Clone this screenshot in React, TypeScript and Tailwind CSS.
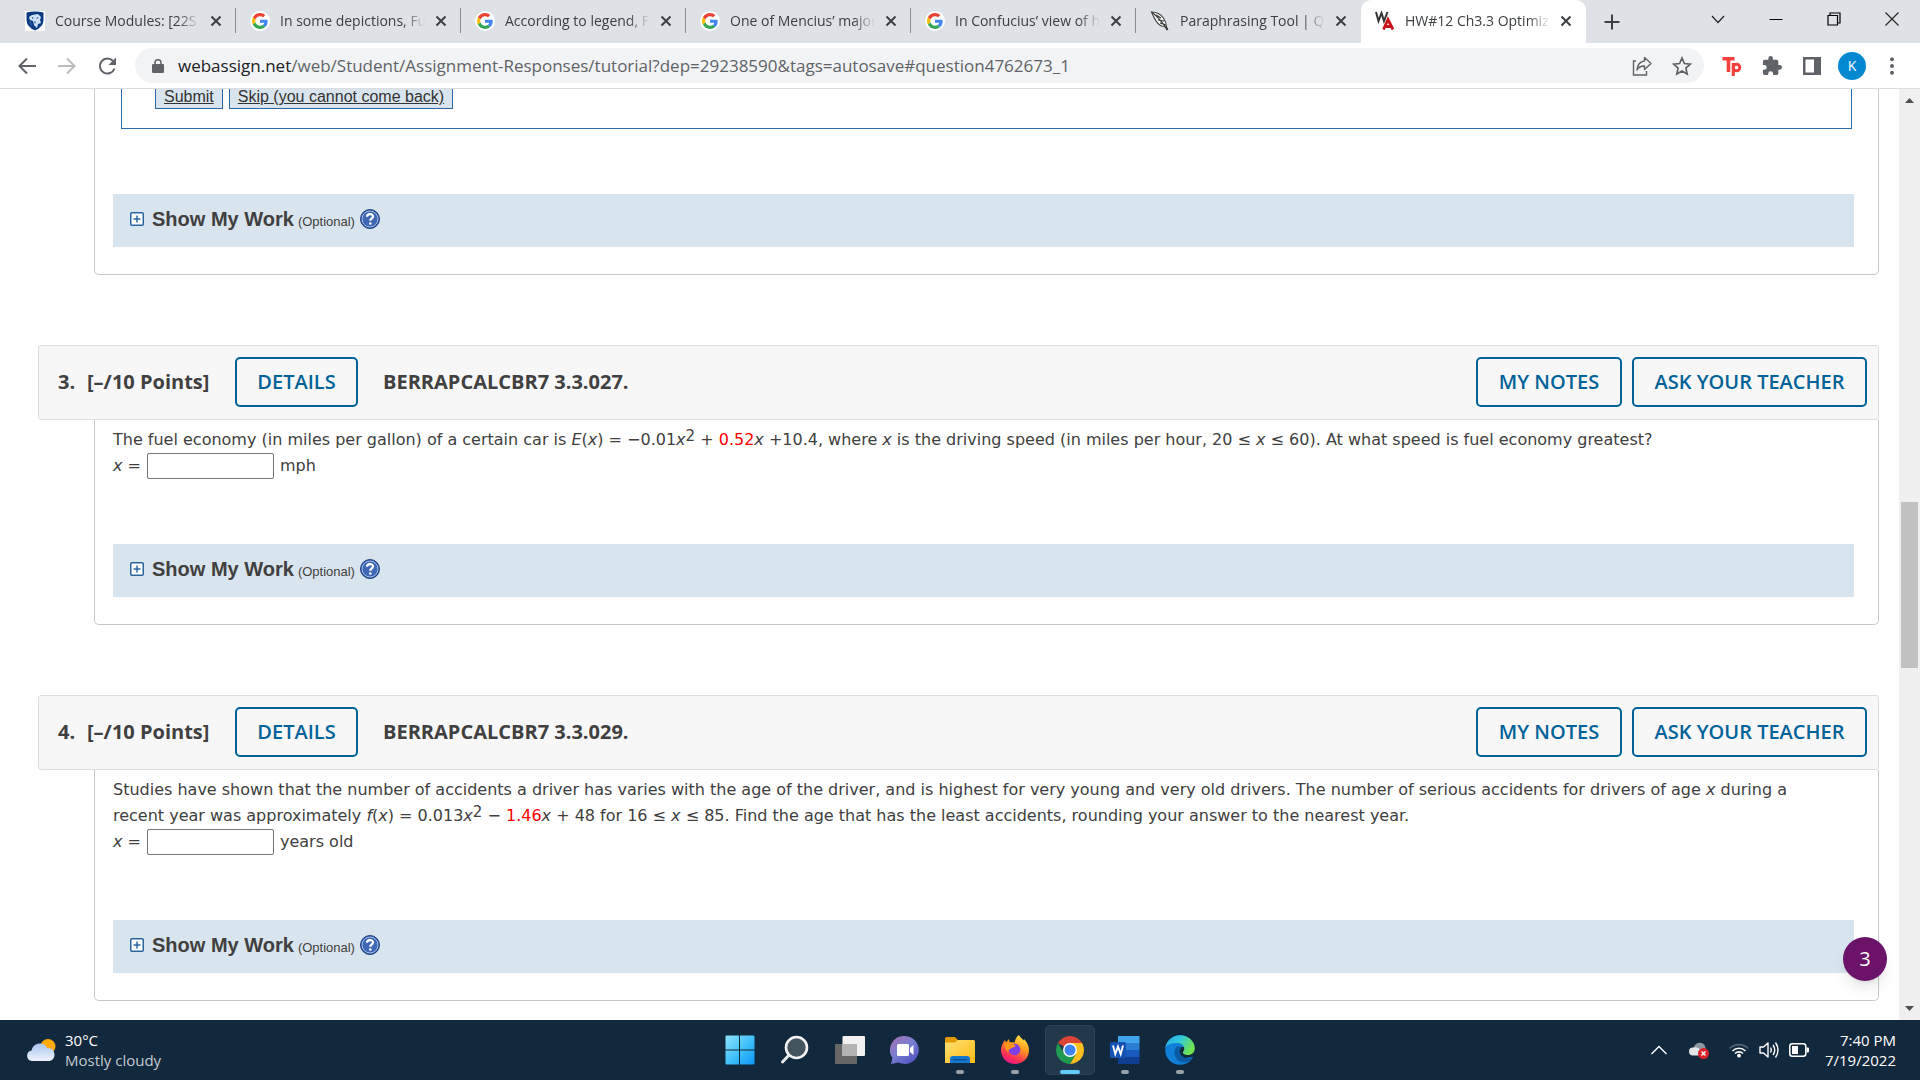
import React from "react";

const tabs = [
  { title: "Course Modules: [22S", icon: "shield" },
  { title: "In some depictions, Fu", icon: "google" },
  { title: "According to legend, F", icon: "google" },
  { title: "One of Mencius’ major", icon: "google" },
  { title: "In Confucius’ view of h", icon: "google" },
  { title: "Paraphrasing Tool | Qu", icon: "quill" },
  { title: "HW#12 Ch3.3 Optimiz", icon: "webassign", active: true },
];

const GoogleIcon = () => (
  <svg viewBox="0 0 24 24" className="h-5 w-5">
    <circle cx="12" cy="12" r="12" fill="#fff" />
    <g transform="translate(2.4 2.4) scale(0.4)">
      <path fill="#EA4335" d="M24 9.5c3.54 0 6.71 1.22 9.21 3.6l6.85-6.85C35.9 2.38 30.47 0 24 0 14.62 0 6.51 5.38 2.56 13.22l7.98 6.19C12.43 13.72 17.74 9.5 24 9.5z" />
      <path fill="#4285F4" d="M46.98 24.55c0-1.57-.15-3.09-.38-4.55H24v9.02h12.94c-.58 2.96-2.26 5.48-4.78 7.18l7.73 6c4.51-4.18 7.09-10.36 7.09-17.65z" />
      <path fill="#FBBC05" d="M10.53 28.59c-.48-1.45-.76-2.99-.76-4.59s.27-3.14.76-4.59l-7.98-6.19C.92 16.46 0 20.12 0 24c0 3.88.92 7.54 2.56 10.78l7.97-6.19z" />
      <path fill="#34A853" d="M24 48c6.48 0 11.93-2.13 15.89-5.81l-7.73-6c-2.15 1.45-4.92 2.3-8.16 2.3-6.26 0-11.57-4.22-13.47-9.91l-7.98 6.19C6.51 42.62 14.62 48 24 48z" />
    </g>
  </svg>
);

const ShieldIcon = () => (
  <svg viewBox="0 0 20 20" className="h-5 w-5">
    <path fill="#fff" d="M0 0h20v20H0z" />
    <path fill="#0b3a82" d="M1.5 1.5Q10-.5 18.5 1.5v8Q18 16 10 19.5 2 16 1.5 9.5z" />
    <path fill="#cfe0f5" d="M4 6l3-2 6-1 3 3-1 3 1 3-3 1-1 4-3-3-1-4-3-1z" />
    <path fill="#2f5fa5" d="M7 6l2 1-2 1zm4 1l3-1-2 2zM9 10l2 1-1 2zM4 10l2 1 1 4-2-2z" />
  </svg>
);

const QuillIcon = () => (
  <svg viewBox="0 0 20 20" className="h-5 w-5" fill="none" stroke="#3a3a3a" strokeWidth="1.1">
    <path fill="#f5f5f5" d="M1.5 1c5 0 9 2 12 6 2 3 3 6 3 9-4 0-8-2-10.5-6C4 7 3 4 1.5 1z" />
    <path d="M1.5 1c6 4 10 9 16 18M6 4l5 3M8 9l6 1M10 12l6 2" />
    <path strokeWidth="2" d="M16 16l1.5 3" />
  </svg>
);

const WebAssignIcon = () => (
  <svg viewBox="0 0 20 20" className="h-5 w-5" fill="none">
    <path stroke="#333" strokeWidth="2" d="M1 1l2.500 9L6.500 2l2.500 8L12.500 1" />
    <path stroke="#c8151b" strokeWidth="2.800" d="M8.500 18.500L13 8.500l5 10M11 15.500h5" />
  </svg>
);

const TabIcon: React.FC<{ name: string }> = ({ name }) => {
  if (name === "google") return <GoogleIcon />;
  if (name === "shield") return <ShieldIcon />;
  if (name === "quill") return <QuillIcon />;
  return <WebAssignIcon />;
};

const TabStrip = () => (
  <div className="flex h-[43px] bg-[#dee1e6]">
    <div role="tablist" className="flex min-w-0 pl-[11px]">
      {tabs.map((tab, i) => (
        <div
          key={tab.title}
          className={`flex w-[225px] items-center pb-0.5 ${tab.active ? "rounded-t-[10px] bg-white" : ""}`}
        >
          <div className="flex min-w-0 flex-1 items-center pl-3.5">
            <span className="shrink-0">
              <TabIcon name={tab.icon} />
            </span>
            <button
              role="tab"
              aria-selected={!!tab.active}
              className="ml-2.5 w-[145px] overflow-hidden text-left text-sm leading-5 whitespace-nowrap text-[#3c4043] [mask-image:linear-gradient(to_right,black_85%,transparent)]"
            >
              {tab.title}
            </button>
            <button aria-label="Close tab" className="ml-2.5 shrink-0">
              <svg viewBox="0 0 12 12" className="h-3 w-3" stroke="#3c4043" strokeWidth="2">
                <path d="M1.5 1.5l9 9m0-9l-9 9" />
              </svg>
            </button>
          </div>
          <span className={`h-[25px] w-px shrink-0 ${i < 5 ? "bg-[#8a8d91]" : ""}`} />
        </div>
      ))}
    </div>
    <button aria-label="New tab" className="ml-[18px] self-center">
      <svg viewBox="0 0 16 16" className="h-4 w-4" stroke="#3c4043" strokeWidth="2">
        <path d="M8 0.5v15M0.5 8h15" />
      </svg>
    </button>
    <div className="ml-auto flex h-[37px] items-center gap-11 pr-[21px]">
      <button aria-label="Search tabs">
        <svg viewBox="0 0 14 14" className="h-3.5 w-3.5" fill="none" stroke="#222" strokeWidth="1.2">
          <path d="M1 4l6 6.5L13 4" />
        </svg>
      </button>
      <button aria-label="Minimize">
        <svg viewBox="0 0 14 14" className="h-3.5 w-3.5" stroke="#000" strokeWidth="1">
          <path d="M0.5 7.500h13" />
        </svg>
      </button>
      <button aria-label="Restore">
        <svg viewBox="0 0 14 14" className="h-3.5 w-3.5" fill="none" stroke="#000" strokeWidth="1.2">
          <path d="M1 3.5h9.5V13H1zM3 3.5V1h10v10h-2.5" />
        </svg>
      </button>
      <button aria-label="Close">
        <svg viewBox="0 0 14 14" className="h-3.5 w-3.5" stroke="#222" strokeWidth="1.1">
          <path d="M0.5 0.5l13 13m0-13l-13 13" />
        </svg>
      </button>
    </div>
  </div>
);

const Toolbar = () => (
  <div className="flex h-[46px] items-center border-b border-[#dadce0] bg-white">
    <div className="flex shrink-0 items-center gap-5 pl-[17px]">
      <button aria-label="Back">
        <svg viewBox="0 0 20 20" className="h-5 w-5" fill="none" stroke="#5f6368" strokeWidth="2">
          <path d="M19 10H3M10 2.5L2.5 10l7.5 7.5" />
        </svg>
      </button>
      <button aria-label="Forward">
        <svg viewBox="0 0 20 20" className="h-5 w-5" fill="none" stroke="#babcbe" strokeWidth="2">
          <path d="M1 10h16M10 2.5l7.5 7.5-7.5 7.5" />
        </svg>
      </button>
      <button aria-label="Reload">
        <svg viewBox="0 0 20 20" className="h-5 w-5" fill="none" stroke="#5f6368" strokeWidth="2">
          <path d="M17.500 12.500a7.500 7.500 0 1 1-1.500-7.500" />
          <path fill="#5f6368" stroke="none" d="M19 1.500v7.500H11.500z" />
        </svg>
      </button>
    </div>
    <div className="ml-[18px] flex h-[35px] min-w-0 flex-1 items-center rounded-full bg-[#f1f3f4] pr-3 pl-[17px]">
      <svg viewBox="0 0 12 14" className="h-3.5 w-3 shrink-0">
        <path fill="#5f6368" d="M1.5 5h9A1.2 1.2 0 0 1 12 6.2v6.600A1.2 1.2 0 0 1 10.8 14H1.2A1.2 1.2 0 0 1 0 12.8V6.2A1.2 1.2 0 0 1 1.2 5z" />
        <path fill="none" stroke="#5f6368" strokeWidth="1.5" d="M3 5.5V3.8a3 3 0 0 1 6 0v1.7" />
      </svg>
      <div
        role="textbox"
        aria-label="Address and search bar"
        className="ml-3.5 min-w-0 flex-1 truncate text-[17px] text-[#5f6368]"
      >
        <span className="text-[#202124]">webassign.net</span>
        /web/Student/Assignment-Responses/tutorial?dep=29238590&amp;tags=autosave#question4762673_1
      </div>
      <button aria-label="Share this page" className="mr-5">
        <svg viewBox="0 0 20 20" className="h-5 w-5" fill="none" stroke="#5f6368" strokeWidth="1.4">
          <path d="M4 5H1.500v14h13v-4" />
          <path strokeLinejoin="round" d="M12.5 1.500l6.500 6-6.500 6v-3.500c-3.500 0-6 1-7.500 4 .5-5 3-8.500 7.500-9z" />
        </svg>
      </button>
      <button aria-label="Bookmark this tab">
        <svg viewBox="0 0 20 20" className="h-5 w-5" fill="none" stroke="#5f6368" strokeWidth="1.7">
          <path d="M10 2l2.400 5.500 6 .6-4.500 4 1.300 5.900L10 14.900 4.800 18l1.300-5.900-4.500-4 6-.6z" />
        </svg>
      </button>
    </div>
    <div className="flex shrink-0 items-center gap-5 px-[18px]">
      <button aria-label="Tp extension">
        <svg viewBox="0 0 20 20" className="h-5 w-5" fill="none" stroke="#f5403c" strokeWidth="3.6">
          <path d="M0.5 2.8h12M6.500 3v13" />
          <path strokeWidth="3" d="M11.3 7v13" />
          <circle cx="14.500" cy="11.500" r="3.3" strokeWidth="3" />
        </svg>
      </button>
      <button aria-label="Extensions">
        <svg viewBox="1 1 22 22" className="h-5 w-5" fill="#5f6368">
          <path d="M20.500 11H19V7a2 2 0 0 0-2-2h-4V3.500a2.500 2.500 0 0 0-5 0V5H4a2 2 0 0 0-2 2v3.800h1.500a2.700 2.700 0 0 1 0 5.400H2V20a2 2 0 0 0 2 2h3.800v-1.500a2.700 2.700 0 0 1 5.400 0V22H17a2 2 0 0 0 2-2v-4h1.500a2.500 2.500 0 0 0 0-5z" />
        </svg>
      </button>
      <button aria-label="Side panel">
        <svg viewBox="0 0 20 20" className="h-5 w-5">
          <path fill="#5f6368" fillRule="evenodd" d="M1 1h18v18H1zM3.500 3.500v13H12v-13z" />
        </svg>
      </button>
      <button aria-label="Profile" className="-mx-1 h-7 w-7 rounded-full bg-[#0288d1] text-sm leading-7 text-white">
        K
      </button>
      <button aria-label="Menu">
        <svg viewBox="0 0 4 18" className="mx-2 h-[18px] w-1" fill="#5f6368">
          <circle cx="2" cy="2.2" r="2" />
          <circle cx="2" cy="9" r="2" />
          <circle cx="2" cy="15.8" r="2" />
        </svg>
      </button>
    </div>
  </div>
);

const ShowMyWork = () => (
  <div className="flex h-[53px] items-start bg-[#d9e5ee] pt-3 pl-[17px] font-['Liberation_Sans',Arial,sans-serif]">
    <button className="flex items-center">
      <svg viewBox="0 0 14 14" className="h-3.5 w-3.5" fill="none">
        <rect x="0.75" y="0.75" width="12.5" height="12.5" rx="1" fill="#fff" stroke="#2a65a0" strokeWidth="1.5" />
        <path stroke="#2a65a0" strokeWidth="1.5" d="M7 3.500v7M3.500 7h7" />
      </svg>
      <span className="ml-2 text-xl leading-[26px] font-bold">Show My Work</span>
      <span className="ml-1 pt-[5px] text-[13px]">(Optional)</span>
    </button>
    <button aria-label="Help" className="ml-[5px] pt-[3px]">
      <svg viewBox="0 0 20 20" className="h-5 w-5">
        <circle cx="10" cy="10" r="9.5" fill="#2a4f98" stroke="#1f4586" />
        <circle cx="10" cy="10" r="8" fill="#3f68b4" stroke="#a9c0e6" />
        <path fill="none" stroke="#fff" strokeWidth="2.2" d="M7 7.800c0-3.600 6-3.500 6-.3 0 2-2.700 2-2.700 4.300" />
        <circle cx="10.3" cy="14.5" r="1.3" fill="#fff" />
      </svg>
    </button>
  </div>
);

interface QuestionProps {
  number: number;
  code: string;
  unit: string;
  children: React.ReactNode;
}

const outlineButton =
  "h-[50px] shrink-0 rounded-[5px] border-2 border-[#006298] text-xl leading-6 font-semibold text-[#006298]";

const Question: React.FC<QuestionProps> = ({ number, code, unit, children }) => (
  <section className="mt-[70px]">
    <header className="flex items-center rounded-[3px] border border-[#ddd] bg-[#f7f7f7] pt-[11px] pr-[11px] pb-3 pl-[19px] text-xl leading-6 font-bold">
      <span className="w-[29px]">{number}.</span>
      <span className="w-[148px]">[–/10 Points]</span>
      <button className={`${outlineButton} w-[123px]`}>DETAILS</button>
      <span className="ml-[25px]">{code}</span>
      <button className={`${outlineButton} ml-auto w-[146px]`}>MY NOTES</button>
      <button className={`${outlineButton} ml-2.5 w-[235px]`}>ASK YOUR TEACHER</button>
    </header>
    <div className="ml-14 rounded-b-[5px] border border-t-0 border-[#c8c8c8] pt-[7px] pr-6 pb-[27px] pl-[18px]">
      <div className="font-['DejaVu_Sans',Verdana,sans-serif] text-base leading-[26px]">
        <p className="pr-8">{children}</p>
        <div className="flex h-[26px] items-center">
          <label htmlFor={`answer-${number}`}>
            <i>x</i> =
          </label>
          <input
            id={`answer-${number}`}
            type="text"
            className="mx-1.5 h-[26px] w-[127px] rounded-[2px] border border-[#767676] bg-white px-1"
          />
          <span>{unit}</span>
        </div>
      </div>
      <div className="mt-[65px]">
        <ShowMyWork />
      </div>
    </div>
  </section>
);

const Sup = () => <sup className="-top-1 text-[15px] leading-none">2</sup>;

const Scrollbar = () => (
  <div className="flex w-[21px] shrink-0 flex-col items-center justify-between bg-[#f0f0f0] py-[9px]">
    <svg viewBox="0 0 9 5" className="h-[5px] w-[9px]" fill="#505050">
      <path d="M0 5L4.500 0 9 5z" />
    </svg>
    <div className="mt-15 h-[166px] w-[17px] bg-[#c1c1c1]" />
    <svg viewBox="0 0 9 5" className="h-[5px] w-[9px]" fill="#505050">
      <path d="M0 0h9L4.500 5z" />
    </svg>
  </div>
);

const WindowsIcon = () => (
  <svg viewBox="0 0 30 30" className="h-[30px] w-[30px]">
    <defs>
      <linearGradient id="win" x1="0" y1="0" x2="1" y2="1">
        <stop offset="0" stopColor="#8ee3fb" />
        <stop offset=".5" stopColor="#43c3fb" />
        <stop offset="1" stopColor="#0a96f6" />
      </linearGradient>
    </defs>
    <path fill="url(#win)" d="M0.5 1.500q0-1 1-1H14v14H0.5zM15 0.500h13.500q1 0 1 1v13H15zM0.500 15.500H14v14H1.500q-1 0-1-1zM15 15.500h14.500v13q0 1-1 1H15z" />
  </svg>
);

const SearchIcon = () => (
  <svg viewBox="0 0 30 30" className="h-[30px] w-[30px]">
    <path stroke="#e8e8e8" strokeWidth="3" strokeLinecap="round" d="M2.500 27l7.500-8" />
    <circle cx="16.5" cy="12.5" r="10.5" fill="#44545f" stroke="#f3f3f3" strokeWidth="2.6" />
  </svg>
);

const TaskViewIcon = () => (
  <svg viewBox="0 0 30 30" className="h-[30px] w-[30px]">
    <rect x="0" y="9" width="22" height="20" rx="1" fill="#666" />
    <rect x="7.5" y="1" width="22.5" height="20" rx="1" fill="#f1f1f1" />
    <path fill="#b3b3b3" d="M7.500 9H22v12H7.500z" />
  </svg>
);

const ChatIcon = () => (
  <svg viewBox="0 0 30 30" className="h-[30px] w-[30px]">
    <defs>
      <linearGradient id="chat" x1="0" y1="0" x2="0.8" y2="1">
        <stop offset="0" stopColor="#a96fb5" />
        <stop offset=".5" stopColor="#7a7fd0" />
        <stop offset="1" stopColor="#4f52c0" />
      </linearGradient>
    </defs>
    <path fill="url(#chat)" d="M15 1a14 14 0 1 1-6.500 26.500L1 29l1.500-6A14 14 0 0 1 15 1z" />
    <rect x="7" y="9" width="12" height="12" rx="1.5" fill="#fff" />
    <path fill="#fff" d="M20 13l3.500-3v10L20 17z" />
  </svg>
);

const FolderIcon = () => (
  <svg viewBox="0 0 30 30" className="h-[30px] w-[30px]">
    <defs>
      <linearGradient id="folder" x1="0" y1="0" x2="1" y2="1">
        <stop offset="0" stopColor="#ffe074" />
        <stop offset="1" stopColor="#fdba12" />
      </linearGradient>
    </defs>
    <path fill="#e19a00" d="M0 3.500Q0 2 1.500 2H10l3 3v5H0z" />
    <path fill="url(#folder)" d="M0 7.500h10L13 5h15.500Q30 5 30 6.500V28H0z" />
    <path fill="#1477cc" d="M5 28v-4.500Q5 21 8 21h14q3 0 3 2.500V28z" />
    <path fill="#0a4f96" d="M8 24h14v1.300H8z" />
  </svg>
);

const FirefoxIcon = () => (
  <svg viewBox="0 0 30 30" className="h-[30px] w-[30px]">
    <defs>
      <linearGradient id="fox" x1="0.8" y1="0" x2="0.3" y2="1">
        <stop offset="0" stopColor="#fff04a" />
        <stop offset=".4" stopColor="#ff9a1f" />
        <stop offset=".75" stopColor="#ff3650" />
        <stop offset="1" stopColor="#e31587" />
      </linearGradient>
    </defs>
    <path fill="url(#fox)" d="M19 0c1 2 3 3.500 4.500 5.500L24 4c3 3 5 7 5 11 0 8-6 14-14 14S1 23 1 15c0-4 2-7.500 4-10l1 2.500 3-3.500.5 3 5 .5c1-3 1.500-5.500 4.500-7.500z" />
    <circle cx="14.5" cy="14.5" r="5.8" fill="#7b3fe4" />
    <path fill="#ff9518" d="M5 8c3-2 6 0 8 1l3 2-4 2c-2 1-3 1-4 4-2-2-4-5-3-9z" />
  </svg>
);

const ChromeIcon = () => (
  <svg viewBox="0 0 30 30" className="h-[30px] w-[30px]">
    <path fill="#db4437" d="M2.880 8A14 14 0 0 1 27.120 8L15 15z" />
    <path fill="#f9c01f" d="M27.120 8A14 14 0 0 1 15 29l6.060-10.500L15 8z" />
    <path fill="#209a50" d="M2.880 8A14 14 0 0 0 15 29l6.060-10.500L15 21 9 18.500z" />
    <circle cx="15" cy="15" r="7" fill="#fff" />
    <circle cx="15" cy="15" r="5.5" fill="#3b83f0" />
  </svg>
);

const WordIcon = () => (
  <svg viewBox="0 0 30 30" className="h-[30px] w-[30px]">
    <path fill="#41a5ee" d="M8 1h21.500v7H8z" />
    <path fill="#2b7cd3" d="M8 8h21.500v7H8z" />
    <path fill="#185abd" d="M8 15h21.500v7H8z" />
    <path fill="#103f91" d="M8 22h21.500v7H8z" />
    <rect x="0" y="7" width="16" height="16" rx="1.5" fill="#1452b3" />
    <path fill="none" stroke="#fff" strokeWidth="1.9" d="M3 10.500L5.300 19 8 11.500l2.700 7.500L13 10.500" />
  </svg>
);

const EdgeIcon = () => (
  <svg viewBox="0 0 30 30" className="h-[30px] w-[30px]">
    <defs>
      <linearGradient id="edgeTop" x1="0" y1="0" x2="1" y2="0.4">
        <stop offset="0" stopColor="#27a8e6" />
        <stop offset=".5" stopColor="#32c8dc" />
        <stop offset="1" stopColor="#6ee44e" />
      </linearGradient>
    </defs>
    <circle cx="15" cy="15" r="14.8" fill="#0f7fd8" />
    <path fill="#12283d" d="M14 12h16v8.500l-2 1.500-8 1-6-3z" />
    <path fill="url(#edgeTop)" d="M.3 13C1.500 5 8 .2 15 .2c9 0 15 7 14.800 13 0 4-3 6.800-7 6.800-3 0-5-1-5-2.500 0-1 1.500-1.500 1.500-4 0-3-3-5.500-7-5.500C6 8 1 10 .3 13z" />
    <path fill="#0c59a4" d="M12.500 11c-4 3-4 10 0 14 3 3 8 3 12 1l3.500-3.500c-6 2.500-12 0-13-5-.5-2.500.5-4 1.500-5z" />
  </svg>
);

const apps = [
  { name: "Start", Icon: WindowsIcon },
  { name: "Search", Icon: SearchIcon },
  { name: "Task View", Icon: TaskViewIcon },
  { name: "Chat", Icon: ChatIcon },
  { name: "File Explorer", Icon: FolderIcon, state: "open" },
  { name: "Firefox", Icon: FirefoxIcon, state: "open" },
  { name: "Chrome", Icon: ChromeIcon, state: "active" },
  { name: "Word", Icon: WordIcon, state: "open" },
  { name: "Edge", Icon: EdgeIcon, state: "open" },
];

const Taskbar = () => (
  <footer className="grid h-[60px] shrink-0 grid-cols-[1fr_auto_1fr] items-center bg-[#12283d] text-[15px] leading-5 text-white">
    <button className="flex items-center gap-[9px] justify-self-start pl-[26px] text-left">
      <svg viewBox="0 0 30 24" className="h-6 w-[30px]">
        <defs>
          <linearGradient id="cloud" x1="0" y1="0" x2="0" y2="1">
            <stop offset="0" stopColor="#a9c4ee" />
            <stop offset="1" stopColor="#eef3fb" />
          </linearGradient>
        </defs>
        <circle cx="22" cy="8.5" r="7.5" fill="#fca90a" />
        <path fill="url(#cloud)" d="M6 23a5.300 5.300 0 0 1-.5-10.500C6.500 8 10 5.500 14 5.500c3.500 0 6 2 7.300 4.700 4-.7 7.200 2.300 7.200 6.300s-2.500 6.500-6 6.500z" />
      </svg>
      <span>
        <span className="block">30°C</span>
        <span className="block text-[#c3cad0]">Mostly cloudy</span>
      </span>
    </button>
    <nav className="flex gap-[5px]">
      {apps.map(({ name, Icon, state }) => (
        <button
          key={name}
          aria-label={name}
          className={`flex h-[50px] w-[50px] flex-col items-center rounded-[5px] border pt-[9px] ${
            state === "active" ? "border-[#2e4254] bg-[#22384b]" : "border-transparent"
          }`}
        >
          <Icon />
          {state && (
            <span
              className={`mt-[5px] h-1 shrink-0 rounded-full ${
                state === "active" ? "w-5 bg-[#60cdff]" : "w-2 bg-[#9aa3ab]"
              }`}
            />
          )}
        </button>
      ))}
    </nav>
    <div className="flex items-center justify-self-end pr-6">
      <button aria-label="Show hidden icons">
        <svg viewBox="0 0 16 10" className="h-2.5 w-4" fill="none" stroke="#fff" strokeWidth="1.4">
          <path d="M0.5 9L8 1.500 15.500 9" />
        </svg>
      </button>
      <button aria-label="OneDrive" className="ml-[22px]">
        <svg viewBox="0 0 20 17" className="h-[17px] w-5">
          <path fill="#8d979f" d="M5 5a6 6 0 0 1 11-1l1 4-9 3z" />
          <path fill="#e3e6e8" d="M4 13.500a4 4 0 0 1 0-8c3-1 6 0 8 3l3 5z" />
          <circle cx="14.5" cy="11.5" r="5.5" fill="#d9222a" />
          <path stroke="#fff" strokeWidth="1.4" d="M12.500 9.500l4 4m0-4l-4 4" />
        </svg>
      </button>
      <button aria-label="Network, volume and battery" className="ml-5 flex items-center gap-2.5">
        <svg viewBox="0 0 20 16" className="h-4 w-5" fill="none" strokeWidth="1.6">
          <path stroke="#51616f" d="M0.7 6.500a13 13 0 0 1 18.600 0" />
          <path stroke="#fff" d="M3.500 9a9.200 9.200 0 0 1 13 0M6 11.500a5.700 5.700 0 0 1 8 0" />
          <circle cx="10" cy="13.7" r="1.9" fill="#fff" />
        </svg>
        <svg viewBox="0 0 20 18" className="h-[18px] w-5" fill="none" stroke="#fff" strokeWidth="1.4">
          <path strokeLinejoin="round" d="M1 6h3.500L9 2v14l-4.500-4H1zM11.500 6.500q1.500 2.500 0 5M14 4q3.500 5 0 10M16.500 1.500q5 7.500 0 15" />
        </svg>
        <svg viewBox="0 0 20 14" className="h-3.5 w-5" fill="none" stroke="#fff" strokeWidth="1.5">
          <rect x="0.8" y="0.8" width="16" height="12.4" rx="2.5" />
          <path fill="#fff" stroke="none" d="M3 3h6v8H3zM17.500 4.500H19q1 0 1 1v3q0 1-1 1h-1.500z" />
        </svg>
      </button>
      <button className="ml-4 text-right">
        <span className="block">7:40 PM</span>
        <span className="block">7/19/2022</span>
      </button>
    </div>
  </footer>
);

const App: React.FC = () => (
  <div className="relative flex h-screen flex-col overflow-hidden bg-white font-['Open_Sans','Segoe_UI',sans-serif] text-[#404040]">
    <TabStrip />
    <Toolbar />
    <div className="flex min-h-0 flex-1">
      <main className="min-w-0 flex-1 overflow-hidden pr-5 pl-[38px]">
        <section className="ml-14 rounded-b-[5px] border border-t-0 border-[#c8c8c8] pr-6 pb-[27px] pl-[18px]">
          <div className="mr-0.5 ml-2 flex h-10 items-start gap-1.5 border border-t-0 border-[#2a6ca8] pl-[33px] font-['Liberation_Sans',Arial,sans-serif] text-base leading-4 text-[#333]">
            <button className="border border-t-0 border-[#2a65a0] bg-[#d9e5ee] px-2 pb-[3px] underline">Submit</button>
            <button className="border border-t-0 border-[#2a65a0] bg-[#d9e5ee] px-2 pb-[3px] underline">
              Skip (you cannot come back)
            </button>
          </div>
          <div className="mt-[65px]">
            <ShowMyWork />
          </div>
        </section>
        <Question number={3} code="BERRAPCALCBR7 3.3.027." unit="mph">
          The fuel economy (in miles per gallon) of a certain car is <i>E</i>(<i>x</i>) = −0.01<i>x</i>
          <Sup /> + <span className="text-[#f00]">0.52</span>
          <i>x</i> +10.4, where <i>x</i> is the driving speed (in miles per hour, 20 ≤ <i>x</i> ≤ 60). At what speed
          is fuel economy greatest?
        </Question>
        <Question number={4} code="BERRAPCALCBR7 3.3.029." unit="years old">
          Studies have shown that the number of accidents a driver has varies with the age of the driver, and is
          highest for very young and very old drivers. The number of serious accidents for drivers of age <i>x</i>{" "}
          during a recent year was approximately <i>f</i>(<i>x</i>) = 0.013<i>x</i>
          <Sup /> − <span className="text-[#f00]">1.46</span>
          <i>x</i> + 48 for 16 ≤ <i>x</i> ≤ 85. Find the age that has the least accidents, rounding your answer to
          the nearest year.
        </Question>
      </main>
      <Scrollbar />
    </div>
    <Taskbar />
    <button
      aria-label="3 notifications"
      className="absolute right-[33px] bottom-[99px] h-11 w-11 rounded-full bg-[#6a1369] text-xl text-white shadow-lg"
    >
      3
    </button>
  </div>
);

export default App;
